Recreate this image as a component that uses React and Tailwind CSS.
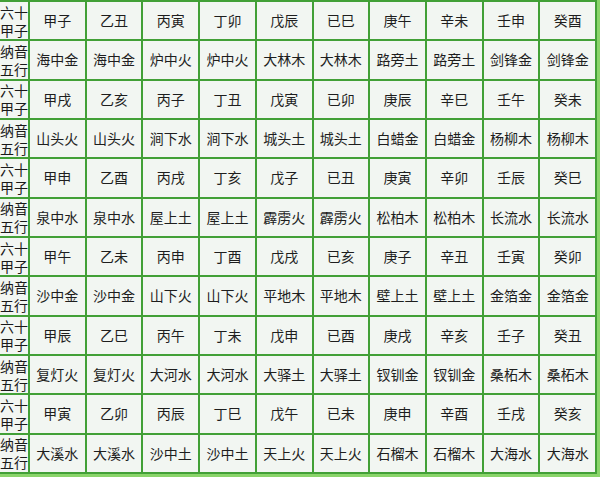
import React from 'react';

const groups = [
  {
    ganzhi: ['甲子', '乙丑', '丙寅', '丁卯', '戊辰', '已巳', '庚午', '辛未', '壬申', '癸酉'],
    nayin: ['海中金', '海中金', '炉中火', '炉中火', '大林木', '大林木', '路旁土', '路旁土', '剑锋金', '剑锋金'],
  },
  {
    ganzhi: ['甲戌', '乙亥', '丙子', '丁丑', '戊寅', '已卯', '庚辰', '辛巳', '壬午', '癸未'],
    nayin: ['山头火', '山头火', '涧下水', '涧下水', '城头土', '城头土', '白蜡金', '白蜡金', '杨柳木', '杨柳木'],
  },
  {
    ganzhi: ['甲申', '乙酉', '丙戌', '丁亥', '戊子', '已丑', '庚寅', '辛卯', '壬辰', '癸巳'],
    nayin: ['泉中水', '泉中水', '屋上土', '屋上土', '霹雳火', '霹雳火', '松柏木', '松柏木', '长流水', '长流水'],
  },
  {
    ganzhi: ['甲午', '乙未', '丙申', '丁酉', '戊戌', '已亥', '庚子', '辛丑', '壬寅', '癸卯'],
    nayin: ['沙中金', '沙中金', '山下火', '山下火', '平地木', '平地木', '壁上土', '壁上土', '金箔金', '金箔金'],
  },
  {
    ganzhi: ['甲辰', '乙巳', '丙午', '丁未', '戊申', '已酉', '庚戌', '辛亥', '壬子', '癸丑'],
    nayin: ['复灯火', '复灯火', '大河水', '大河水', '大驿土', '大驿土', '钗钏金', '钗钏金', '桑柘木', '桑柘木'],
  },
  {
    ganzhi: ['甲寅', '乙卯', '丙辰', '丁巳', '戊午', '已未', '庚申', '辛酉', '壬戌', '癸亥'],
    nayin: ['大溪水', '大溪水', '沙中土', '沙中土', '天上火', '天上火', '石榴木', '石榴木', '大海水', '大海水'],
  },
];

const font = { fontFamily: '"Noto Sans CJK SC", "Noto Sans", sans-serif' };

function Label({ top, bottom }) {
  return (
    <div className="flex flex-col justify-center bg-[#f2f6f2] text-[14px] leading-[18px] text-[#1a1a1a]">
      <span>{top}</span>
      <span>{bottom}</span>
    </div>
  );
}

function Cell({ text }) {
  return (
    <div className="flex items-center justify-center bg-[#f2f6f2] text-[14px] text-[#1e1e1e]">
      {text}
    </div>
  );
}

export default function App() {
  const rows = [];
  groups.forEach((g, i) => {
    rows.push(<Label key={`l1-${i}`} top="六十" bottom="甲子" />);
    g.ganzhi.forEach((t, j) => rows.push(<Cell key={`g-${i}-${j}`} text={t} />));
    rows.push(<Label key={`l2-${i}`} top="纳音" bottom="五行" />);
    g.nayin.forEach((t, j) => rows.push(<Cell key={`n-${i}-${j}`} text={t} />));
  });

  return (
    <div className="w-[600px] h-[477px] bg-[#8ad46a] overflow-hidden" style={font}>
      <div className="w-[597px] h-[474px] bg-[#42a037] pt-[2px] pr-[2px] pb-[2px] grid grid-cols-[28px_repeat(10,1fr)] grid-rows-[repeat(12,1fr)] gap-[2px]">
        {rows}
      </div>
    </div>
  );
}
